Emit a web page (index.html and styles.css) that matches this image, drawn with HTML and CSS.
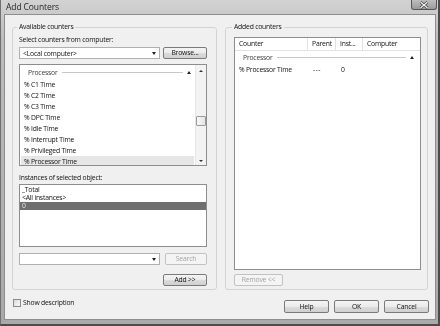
FILE: index.html
```html
<!DOCTYPE html>
<html lang="en">
<head>
    <meta charset="UTF-8">
    <title>Add Counters</title>
    <link rel="stylesheet" href="styles.css">
</head>
<body>
    <div class="window">
        <div class="titlebar">
            <span class="title">Add Counters</span>
            <div class="close">
                <svg width="10" height="8" viewBox="0 0 10 8"><path d="M1.5 1 L8.5 7 M8.5 1 L1.5 7" stroke="#3a3a3a" stroke-width="2.6"/><path d="M1.5 1 L8.5 7 M8.5 1 L1.5 7" stroke="#f4f4f4" stroke-width="1.2"/></svg>
            </div>
        </div>

        <div class="client">
            <div class="groups">
                <div class="group left">
                    <div class="group-title">Available counters</div>

                    <div class="label first">Select counters from computer:</div>
                    <div class="row">
                        <div class="combo">
                            <span>&lt;Local computer&gt;</span>
                            <span class="arrow"></span>
                        </div>
                        <button class="btn browse">Browse...</button>
                    </div>

                    <div class="list counters">
                        <div class="list-body">
                            <div class="cat">
                                <span>Processor</span>
                                <span class="rule"></span>
                                <span class="caret"></span>
                            </div>
                            <div class="item">% C1 Time</div>
                            <div class="item">% C2 Time</div>
                            <div class="item">% C3 Time</div>
                            <div class="item">% DPC Time</div>
                            <div class="item">% Idle Time</div>
                            <div class="item">% Interrupt Time</div>
                            <div class="item">% Privileged Time</div>
                            <div class="item current">% Processor Time</div>
                        </div>
                        <div class="vscroll">
                            <span class="sarrow up"></span>
                            <span class="thumb"></span>
                            <span class="sarrow down"></span>
                        </div>
                    </div>

                    <div class="label">Instances of selected object:</div>
                    <div class="list instances">
                        <div class="inst">_Total</div>
                        <div class="inst">&lt;All instances&gt;</div>
                        <div class="inst selected">0</div>
                    </div>

                    <div class="row search-row">
                        <div class="combo">
                            <span></span>
                            <span class="arrow"></span>
                        </div>
                        <button class="btn search" disabled>Search</button>
                    </div>

                    <div class="row add-row">
                        <button class="btn add">Add &gt;&gt;</button>
                    </div>
                </div>

                <div class="group right">
                    <div class="group-title">Added counters</div>

                    <div class="listview">
                        <div class="lv-head">
                            <div class="col c-counter">Counter</div>
                            <div class="col c-parent">Parent</div>
                            <div class="col c-inst">Inst...</div>
                            <div class="col c-comp">Computer</div>
                        </div>
                        <div class="cat lv-cat">
                            <span>Processor</span>
                            <span class="rule"></span>
                            <span class="caret"></span>
                        </div>
                        <div class="lv-row">
                            <div class="col c-counter">% Processor Time</div>
                            <div class="col c-parent dashes">---</div>
                            <div class="col c-inst">0</div>
                            <div class="col c-comp"></div>
                        </div>
                    </div>

                    <button class="btn remove" disabled>Remove &lt;&lt;</button>
                </div>
            </div>

            <div class="footer">
                <label class="check">
                    <span class="box"></span>
                    Show description
                </label>
                <div class="actions">
                    <button class="btn">Help</button>
                    <button class="btn">OK</button>
                    <button class="btn">Cancel</button>
                </div>
            </div>
        </div>
    </div>
</body>
</html>
```

FILE: styles.css
```css
* {
    box-sizing: border-box;
}

body {
    margin: 0;
    width: 440px;
    height: 326px;
    overflow: hidden;
    font-family: "Open Sans", "Liberation Sans", sans-serif;
    font-size: 6.8px;
    letter-spacing: -0.2px;
    color: #111;
}

/* the screenshot is greyscale, keep the text fringes grey too */
.window {
    filter: grayscale(1);
    height: 326px;
    background: linear-gradient(to bottom, #d2d2d2, #bdbdbd 40px, #a9a9a9);
    border-left: 1px solid #707070;
    border-right: 2px solid #4c4c4c;
    border-bottom: 2px solid #4c4c4c;
    padding: 0 2px 4px 3px;
    display: flex;
    flex-direction: column;
}

.titlebar {
    height: 14px;
    display: flex;
    justify-content: space-between;
    align-items: flex-start;
}

.title {
    font-size: 8.5px;
    letter-spacing: -0.1px;
    line-height: 14px;
    padding-left: 2px;
    color: #262626;
}

.close {
    width: 26px;
    height: 10px;
    margin-right: -1px;
    border: 1px solid #555;
    border-top: none;
    border-radius: 0 0 3px 3px;
    background: linear-gradient(to bottom, #bdbdbd, #9a9a9a);
    display: flex;
    justify-content: center;
    align-items: center;
}

.client {
    flex: 1;
    background: #f0f0f0;
    border: 1px solid #8e8e8e;
    padding: 12px 7px 0 7px;
}

.groups {
    display: flex;
    gap: 8px;
}

.group {
    border: 1px solid #d3d3d3;
    border-radius: 3px;
    height: 263px;
}

.group.left {
    width: 205px;
    padding: 0 9px 0 6px;
}

.group.right {
    width: 203px;
    padding: 0 6px 0 8px;
}

.group-title {
    margin: -6px 0 0 -2px;
    padding: 0 2px;
    width: fit-content;
    background: #f0f0f0;
    line-height: 10px;
}

.label {
    line-height: 10px;
    margin-top: 7px;
}

.label.first {
    margin-top: 3px;
}

.row {
    display: flex;
    justify-content: space-between;
    margin-top: 2px;
}

.combo {
    width: 141px;
    height: 12px;
    border: 1px solid #b0b0b0;
    background: #fff;
    display: flex;
    justify-content: space-between;
    align-items: center;
    padding: 0 3px 0 3px;
}

.arrow {
    width: 0;
    height: 0;
    border-left: 2.5px solid transparent;
    border-right: 2.5px solid transparent;
    border-top: 3px solid #222;
}

.btn {
    font: inherit;
    letter-spacing: inherit;
    color: #111;
    height: 12px;
    padding: 0;
    border: 1px solid #7a7a7a;
    border-radius: 2px;
    background: linear-gradient(to bottom, #f4f4f4 0%, #ebebeb 50%, #dcdcdc 51%, #d0d0d0 100%);
    line-height: 10px;
}

.btn:disabled {
    color: #a3a3a3;
    border-color: #c2c2c2;
    background: #f4f4f4;
}

.browse {
    width: 44px;
}

.search {
    width: 42px;
}

.list {
    background: #fff;
    border: 1px solid #8d8d8d;
}

.counters {
    margin-top: 5px;
    height: 102px;
    display: flex;
    overflow: hidden;
}

.list-body {
    flex: 1;
    padding: 0 1px 0 1px;
}

.cat {
    height: 14px;
    display: flex;
    align-items: center;
    padding: 0 3px 0 7px;
    color: #404040;
}

.rule {
    flex: 1;
    height: 1px;
    background: #c8c8c8;
    margin: 0 4px;
}

.caret {
    width: 0;
    height: 0;
    border-left: 2.5px solid transparent;
    border-right: 2.5px solid transparent;
    border-bottom: 3px solid #222;
}

.item {
    height: 11px;
    line-height: 11px;
    padding-left: 3px;
}

.item.current {
    background: #e6e6e6;
}

.vscroll {
    width: 11px;
    background: #f3f3f3;
    border-left: 1px solid #e6e6e6;
    display: flex;
    flex-direction: column;
    align-items: center;
    padding: 5px 0 3px;
}

.sarrow {
    width: 0;
    height: 0;
    border-left: 2px solid transparent;
    border-right: 2px solid transparent;
}

.sarrow.up {
    border-bottom: 2px solid #333;
}

.sarrow.down {
    border-top: 2px solid #333;
    margin-top: auto;
}

.thumb {
    width: 10px;
    height: 10px;
    margin-top: 44px;
    border: 1px solid #9a9a9a;
    border-radius: 1px;
    background: linear-gradient(to right, #f8f8f8, #e4e4e4);
}

.instances {
    margin-top: 1px;
    height: 63px;
    padding-top: 1px;
}

.inst {
    height: 8px;
    line-height: 8px;
    padding-left: 2px;
}

.inst.selected {
    background: #6f6f6f;
    color: #e8e8e8;
}

.search-row {
    margin-top: 6px;
}

.add-row {
    justify-content: flex-end;
    margin-top: 9px;
}

.add {
    width: 44px;
}

.listview {
    margin-top: 5px;
    width: 187px;
    height: 233px;
    border: 1px solid #8d8d8d;
    background: #fff;
}

.lv-head {
    display: flex;
    height: 13px;
    border-bottom: 1px solid #e2e2e2;
}

.lv-head .col {
    line-height: 12px;
    border-right: 1px solid #e2e2e2;
}

.lv-head .c-comp {
    border-right: none;
}

.col {
    padding-left: 4px;
    white-space: nowrap;
    overflow: hidden;
}

.c-counter {
    width: 73px;
}

.c-parent {
    width: 28px;
}

.c-inst {
    width: 27px;
}

.c-comp {
    flex: 1;
}

.lv-cat {
    height: 13px;
    padding-left: 8px;
    padding-right: 6px;
}

.lv-row {
    display: flex;
    height: 12px;
    line-height: 12px;
}

.lv-row .c-parent {
    padding-left: 5px;
}

.lv-row .c-inst {
    padding-left: 5px;
}

.dashes {
    letter-spacing: 0.4px;
}

.remove {
    margin-top: 4px;
    width: 49px;
}

.footer {
    display: flex;
    justify-content: space-between;
    padding: 7px 0 0 1px;
}

.check {
    display: flex;
    align-items: center;
    gap: 2px;
    height: 9px;
    margin-top: 1px;
}

.box {
    width: 8px;
    height: 8px;
    border: 1px solid #8a8a8a;
    background: linear-gradient(135deg, #dcdcdc, #fafafa);
}

.actions {
    display: flex;
    gap: 5px;
    margin-top: 3px;
    margin-right: -1px;
}

.actions .btn {
    width: 45px;
    height: 13px;
}
```
